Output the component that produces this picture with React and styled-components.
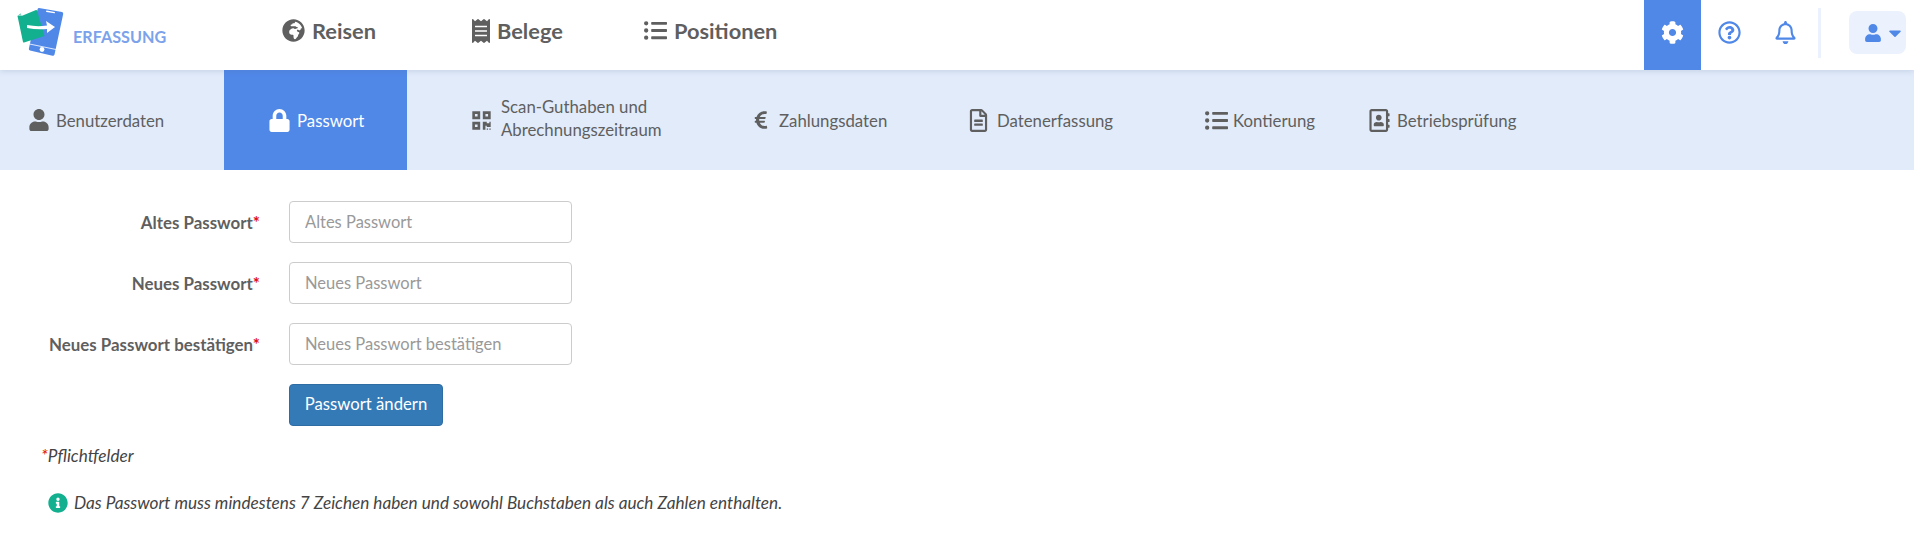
import React from 'react';
import styled, { createGlobalStyle } from 'styled-components';
import {
  FaGlobeAfrica,
  FaReceipt,
  FaListUl,
  FaCog,
  FaRegQuestionCircle,
  FaRegBell,
  FaUser,
  FaCaretDown,
  FaLock,
  FaQrcode,
  FaEuroSign,
  FaRegFileAlt,
  FaRegAddressBook,
  FaInfoCircle,
} from 'react-icons/fa';

const BLUE = '#5088e8';
const TEXT = '#5f5f5f';

const GlobalStyle = createGlobalStyle`
  html, body {
    margin: 0;
    padding: 0;
    background: #ffffff;
    font-family: Lato, "Noto Sans", sans-serif;
    color: ${TEXT};
  }
  * {
    box-sizing: border-box;
  }
`;

const tabs = [
  { label: 'Benutzerdaten', Icon: FaUser, width: 224, pad: 28, size: 22, gap: 6 },
  { label: 'Passwort', Icon: FaLock, width: 183, pad: 44, size: 23, gap: 6, active: true },
  { label: ['Scan-Guthaben und', 'Abrechnungszeitraum'], Icon: FaQrcode, width: 344, pad: 64, size: 21, gap: 9 },
  { label: 'Zahlungsdaten', Icon: FaEuroSign, width: 216, size: 20, gap: 8 },
  { label: 'Datenerfassung', Icon: FaRegFileAlt, width: 238, size: 23, gap: 7 },
  { label: 'Kontierung', Icon: FaListUl, width: 163, size: 23, gap: 5 },
  { label: 'Betriebsprüfung', Icon: FaRegAddressBook, width: 200, size: 23, gap: 6 },
];

const fields = ['Altes Passwort', 'Neues Passwort', 'Neues Passwort bestätigen'];

const Logo = () => (
  <svg width="48" height="50" viewBox="0 0 48 50">
    {/* phone */}
    <path d="M22 1 L45 5 Q46.500 5.300 46.200 7 L37.500 47.500 Q37 49 35.500 48.700 L13 43.500 Q11.500 43 11.900 41.500 L20.500 2.500 Q20.800 0.800 22 1 Z" fill={BLUE} />
    <rect x="29" y="4.200" width="9" height="1.300" rx="0.600" fill="#fff" transform="rotate(10 33 5)" />
    <path d="M12.500 37 L39 42.500" stroke="#fff" strokeWidth="0.800" />
    <circle cx="25" cy="42.500" r="2.400" fill="#fff" />
    {/* sheet of paper */}
    <path d="M0.500 9 L3.500 6.500 L4.500 9 L19 3 Q19.800 2.800 20 3.500 L27.500 29 L7 35.500 Q6.300 35.700 6 35 Z" fill="#12b08f" />
    <path d="M0.500 9 L3.500 6.500 L4.500 9 Z" fill="#8fdcc9" />
    {/* arrow */}
    <path d="M10 18 Q20 20 30 18.500 L29 14 L38 20 L30 26 L30 22 Q20 23 10 21 Z" fill="#fff" />
  </svg>
);

const App = () => {
  return (
    <Page>
      <GlobalStyle />
      <Header>
        <Brand>
          <Logo />
          <BrandName>ERFASSUNG</BrandName>
        </Brand>
        <MainNav>
          <MainLink $width={187} $gap={7}>
            <FaGlobeAfrica size={23} />
            Reisen
          </MainLink>
          <MainLink $width={175} $gap={4}>
            <FaReceipt size={24} />
            Belege
          </MainLink>
          <MainLink $gap={7}>
            <FaListUl size={23} />
            Positionen
          </MainLink>
        </MainNav>
        <Tools>
          <SettingsButton>
            <FaCog size={23} />
          </SettingsButton>
          <ToolButton>
            <FaRegQuestionCircle size={23} />
          </ToolButton>
          <ToolButton>
            <FaRegBell size={23} />
          </ToolButton>
          <Divider />
          <UserButton>
            <FaUser size={18} />
            <FaCaretDown size={20} />
          </UserButton>
        </Tools>
      </Header>

      <SubNav>
        {tabs.map(({ label, Icon, width, pad, size, gap, active }) => (
          <Tab key={label} $width={width} $pad={pad} $gap={gap} $active={active}>
            <Icon size={size} />
            {Array.isArray(label) ? (
              <TabLabel $double>
                {label.map((line) => (
                  <div key={line}>{line}</div>
                ))}
              </TabLabel>
            ) : (
              <TabLabel>{label}</TabLabel>
            )}
          </Tab>
        ))}
      </SubNav>

      <Form>
        {fields.map((field) => (
          <FormRow key={field}>
            <FieldLabel>
              {field}
              <Required>*</Required>
            </FieldLabel>
            <FieldInput type="password" placeholder={field} />
          </FormRow>
        ))}
        <FormRow>
          <FieldLabel />
          <SubmitButton type="button">Passwort ändern</SubmitButton>
        </FormRow>
      </Form>

      <RequiredNote>
        <Required>*</Required>Pflichtfelder
      </RequiredNote>
      <InfoNote>
        <FaInfoCircle size={20} color="#12b08f" />
        Das Passwort muss mindestens 7 Zeichen haben und sowohl Buchstaben als auch Zahlen enthalten.
      </InfoNote>
    </Page>
  );
};

export default App;

const Page = styled.div`
  width: 1914px;
  height: 537px;
  overflow: hidden;
`;

const Header = styled.header`
  position: relative;
  z-index: 1;
  height: 70px;
  display: flex;
  align-items: stretch;
  background: #ffffff;
  box-shadow: 0 1px 6px rgba(80, 100, 150, 0.2);
`;

const Brand = styled.div`
  width: 282px;
  display: flex;
  align-items: center;
  padding: 0 0 6px 17px;
  gap: 8px;
`;

const BrandName = styled.span`
  font-size: 16.200px;
  font-weight: 700;
  color: #7ba2ea;
  margin-top: 8px;
`;

const MainNav = styled.nav`
  display: flex;
  align-items: center;
  flex: 1;
  padding-bottom: 9px;
`;

const MainLink = styled.a`
  width: ${(p) => (p.$width ? `${p.$width}px` : 'auto')};
  display: flex;
  align-items: center;
  gap: ${(p) => p.$gap}px;
  font-size: 21.800px;
  font-weight: 700;
  color: ${TEXT};
`;

const Tools = styled.div`
  display: flex;
  align-items: stretch;
  padding-right: 8px;
`;

const SettingsButton = styled.div`
  width: 57px;
  padding-bottom: 6px;
  display: flex;
  align-items: center;
  justify-content: center;
  background: ${BLUE};
  color: #ffffff;
`;

const ToolButton = styled.div`
  width: 56px;
  padding-bottom: 6px;
  display: flex;
  align-items: center;
  justify-content: center;
  color: ${BLUE};
`;

const Divider = styled.div`
  width: 3px;
  height: 50px;
  margin: 8px 28px 0 5px;
  background: #ebf2fd;
`;

const UserButton = styled.div`
  width: 57px;
  height: 43px;
  margin-top: 11px;
  padding-left: 15px;
  display: flex;
  align-items: center;
  gap: 3px;
  border-radius: 8px;
  background: #ebf2fd;
  color: ${BLUE};
`;

const SubNav = styled.div`
  height: 100px;
  display: flex;
  background: #e1ebfa;
`;

const Tab = styled.div`
  width: ${(p) => p.$width}px;
  padding-left: ${(p) => p.$pad || 0}px;
  display: flex;
  align-items: center;
  gap: ${(p) => p.$gap}px;
  background: ${(p) => (p.$active ? BLUE : 'transparent')};
  color: ${(p) => (p.$active ? '#ffffff' : TEXT)};
`;

const TabLabel = styled.div`
  font-size: 16.800px;
  line-height: 23px;
  margin-top: ${(p) => (p.$double ? '-5px' : '0')};
`;

const Form = styled.form`
  display: flex;
  flex-direction: column;
  gap: 19px;
  padding-top: 31px;
`;

const FormRow = styled.div`
  display: flex;
  align-items: center;
`;

const FieldLabel = styled.label`
  width: 260px;
  margin-right: 29px;
  text-align: right;
  font-size: 16.900px;
  font-weight: 700;
`;

const Required = styled.span`
  color: #e01010;
`;

const FieldInput = styled.input`
  width: 283px;
  height: 42px;
  padding: 0 15px;
  border: 1px solid #cccccc;
  border-radius: 4px;
  font-family: inherit;
  font-size: 16.500px;
  &::placeholder {
    color: #999999;
  }
`;

const SubmitButton = styled.button`
  width: 154px;
  height: 42px;
  padding-bottom: 3px;
  border: 1px solid #2e6da4;
  border-radius: 4px;
  background: #337ab7;
  color: #ffffff;
  font-family: inherit;
  font-size: 16.700px;
`;

const RequiredNote = styled.div`
  margin: 18px 0 0 41px;
  font-size: 17.200px;
  line-height: 24px;
  font-style: italic;
  color: #444444;
`;

const InfoNote = styled.div`
  margin: 23px 0 0 48px;
  display: flex;
  align-items: center;
  gap: 6px;
  font-size: 17.200px;
  line-height: 24px;
  font-style: italic;
  color: #444444;
`;
